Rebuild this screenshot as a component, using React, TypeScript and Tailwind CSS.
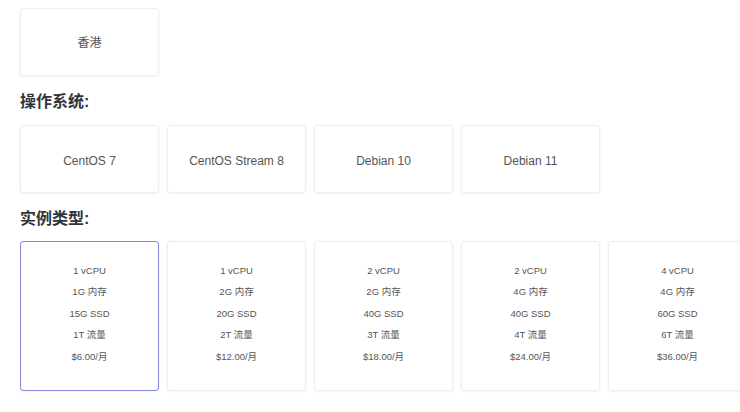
const regions = ["香港"];
const systems = ["CentOS 7", "CentOS Stream 8", "Debian 10", "Debian 11"];

type Plan = { cpu: string; ram: string; disk: string; traffic: string; price: string };

const plans: Plan[] = [
  { cpu: "1 vCPU", ram: "1G 内存", disk: "15G SSD", traffic: "1T 流量", price: "$6.00/月" },
  { cpu: "1 vCPU", ram: "2G 内存", disk: "20G SSD", traffic: "2T 流量", price: "$12.00/月" },
  { cpu: "2 vCPU", ram: "2G 内存", disk: "40G SSD", traffic: "3T 流量", price: "$18.00/月" },
  { cpu: "2 vCPU", ram: "4G 内存", disk: "40G SSD", traffic: "4T 流量", price: "$24.00/月" },
  { cpu: "4 vCPU", ram: "4G 内存", disk: "60G SSD", traffic: "6T 流量", price: "$36.00/月" },
];

const font = { fontFamily: '"Liberation Sans", Arial, "Noto Sans CJK SC", sans-serif' };

function Card({ selected, className, children }: { selected?: boolean; className?: string; children: React.ReactNode }) {
  return (
    <div
      className={
        "flex w-[139px] shrink-0 flex-col items-center justify-center rounded-[3px] border bg-white text-[#555] shadow-[0_1px_3px_rgba(0,0,0,0.05)] " +
        (selected ? "border-[#858bd9] " : "border-[#eeeeee] ") +
        (className ?? "")
      }
    >
      {children}
    </div>
  );
}

function Heading({ className, children }: { className?: string; children: React.ReactNode }) {
  return (
    <h2 className={"mt-[14px] h-6 text-[16px] font-bold leading-6 text-[#30353d] " + (className ?? "mb-[11px]")}>
      {children}
    </h2>
  );
}

export default function App() {
  return (
    <div className="h-[412px] w-[740px] overflow-hidden bg-white pl-5 pt-2" style={font}>
      <div className="flex gap-2">
        {regions.map((r) => (
          <Card key={r} className="h-[68px] pt-[2px] text-[12px]">
            {r}
          </Card>
        ))}
      </div>

      <Heading>操作系统:</Heading>
      <div className="flex gap-2">
        {systems.map((s) => (
          <Card key={s} className="h-[68px] pt-[3px] text-[12px]">
            {s}
          </Card>
        ))}
      </div>

      <Heading className="mb-[10px]">实例类型:</Heading>
      <div className="flex gap-2">
        {plans.map((p, i) => (
          <Card key={i} selected={i === 0} className="h-[150px] pb-[5px] text-[9.5px] leading-[21.5px]">
            <span>{p.cpu}</span>
            <span>{p.ram}</span>
            <span>{p.disk}</span>
            <span>{p.traffic}</span>
            <span>{p.price}</span>
          </Card>
        ))}
      </div>
    </div>
  );
}
